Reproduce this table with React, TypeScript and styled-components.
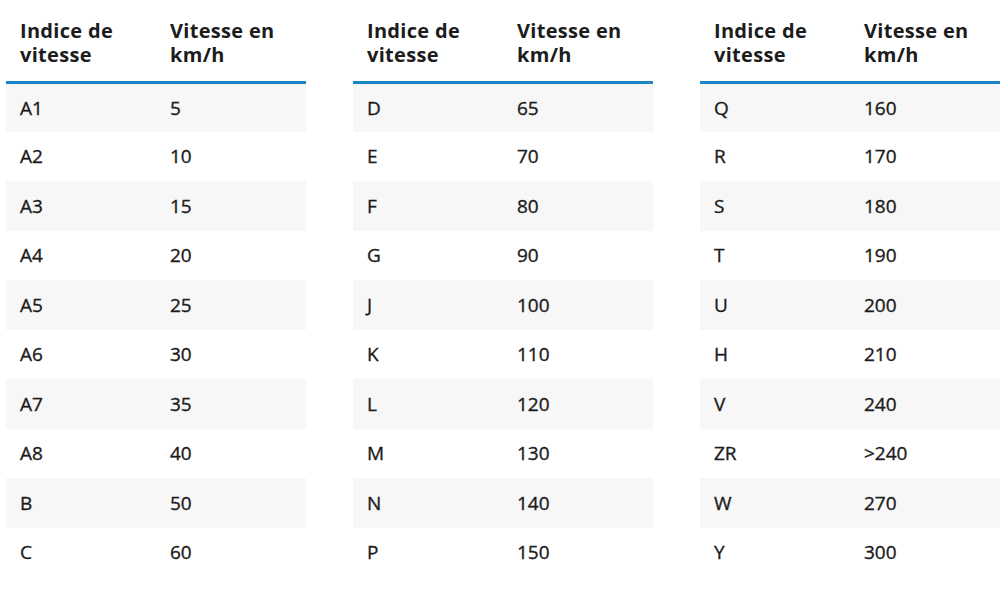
import React from "react";
import styled, { createGlobalStyle } from "styled-components";

const GlobalStyle = createGlobalStyle`
    html, body {
        margin: 0;
        padding: 0;
        background: #ffffff;
    }
    body {
        font-family: "Open Sans", "Noto Sans", Arial, sans-serif;
        color: #1c1c1c;
    }
`

const Page = styled.div`
    display: flex;
    gap: 47px;
    padding-left: 6px;
    width: 1000px;
    height: 591px;
    box-sizing: border-box;
    overflow: hidden;
`
const Table = styled.table`
    flex: 0 0 300px;
    width: 300px;
    border-collapse: collapse;
    table-layout: fixed;
    align-self: flex-start;
`
const HeadCell = styled.th`
    width: 150px;
    height: 82px;
    box-sizing: border-box;
    padding: 19px 14px 0 14px;
    text-align: left;
    vertical-align: top;
    font-size: 20px;
    line-height: 24px;
    letter-spacing: 0.3px;
    font-weight: 700;
    border-bottom: 3px solid #1b87c9;
    color: #1c1c1c;
`
const Row = styled.tr<{ $striped: boolean }>`
    background: ${p => (p.$striped ? "#f7f7f7" : "#ffffff")};
`
const Cell = styled.td`
    height: 49.5px;
    box-sizing: border-box;
    padding: 0 14px;
    font-size: 19px;
    font-weight: 400;
    -webkit-text-stroke: 0.35px #1c1c1c;
    vertical-align: middle;
    color: #1c1c1c;
`

const tables: [string, string][][] = [
    [["A1", "5"], ["A2", "10"], ["A3", "15"], ["A4", "20"], ["A5", "25"], ["A6", "30"], ["A7", "35"], ["A8", "40"], ["B", "50"], ["C", "60"]],
    [["D", "65"], ["E", "70"], ["F", "80"], ["G", "90"], ["J", "100"], ["K", "110"], ["L", "120"], ["M", "130"], ["N", "140"], ["P", "150"]],
    [["Q", "160"], ["R", "170"], ["S", "180"], ["T", "190"], ["U", "200"], ["H", "210"], ["V", "240"], ["ZR", ">240"], ["W", "270"], ["Y", "300"]],
]

const SpeedTable = ({ rows }: { rows: [string, string][] }) => (
    <Table>
        <thead>
            <tr>
                <HeadCell>Indice de vitesse</HeadCell>
                <HeadCell>Vitesse en km/h</HeadCell>
            </tr>
        </thead>
        <tbody>
            {rows.map(([code, speed], i) => (
                <Row key={code} $striped={i % 2 === 0}>
                    <Cell>{code}</Cell>
                    <Cell>{speed}</Cell>
                </Row>
            ))}
        </tbody>
    </Table>
)

const App = () => {
    return (
        <>
            <GlobalStyle />
            <Page>
                {tables.map((rows, i) => (
                    <SpeedTable key={i} rows={rows} />
                ))}
            </Page>
        </>
    )
}

export default App
